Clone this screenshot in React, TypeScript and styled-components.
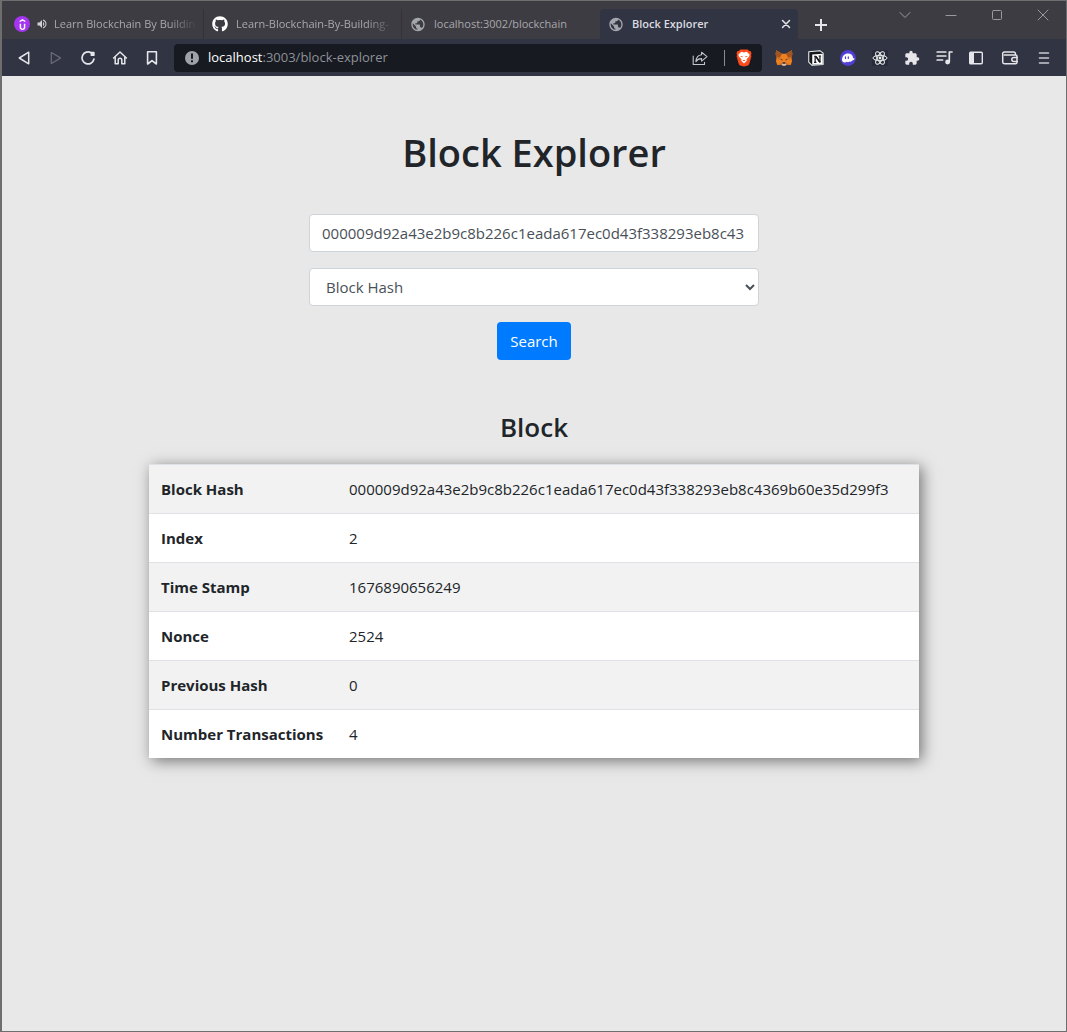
import React, { useState } from "react";
import styled, { createGlobalStyle, css } from "styled-components";
import { FaGithub } from "react-icons/fa";
import { MdExtension, MdPublic, MdVolumeUp } from "react-icons/md";
import { SiUdemy } from "react-icons/si";

const FONT = `"Segoe UI", "Open Sans", "Noto Sans", sans-serif`;

const GlobalStyle = createGlobalStyle`
  *, *::before, *::after { box-sizing: border-box; }
  body { margin: 0; background: #e8e8e8; color: #212529; font-family: ${FONT}; }
  button, input, select { font-family: inherit; margin: 0; }
`;

const Window = styled.div`
  min-height: 100vh;
  display: flex;
  flex-direction: column;
  border: 1px solid #6e6e6e;
  border-left-width: 2px;
`;

const TabStrip = styled.header`
  height: 38px;
  display: flex;
  align-items: flex-end;
  padding-left: 4px;
  background: #3d3c43;
`;

const Tab = styled.a<{ $active?: boolean }>`
  flex: 0 1 198px;
  min-width: 0;
  height: 30px;
  padding: 0 6px 0 8px;
  display: flex;
  align-items: center;
  color: #a8a8ac;
  font-size: 11px;
  line-height: 18px;
  text-decoration: none;
  border-right: 1px solid transparent;

  ${({ $active }) =>
    $active
      ? css`
          background: #313443;
          border-radius: 4px 4px 0 0;
          color: #dcdce0;
          font-weight: 600;
        `
      : css`
          &:nth-child(-n + 2) {
            border-right-color: #333238;
          }
        `}
`;

const TabIcon = styled.span`
  flex: none;
  width: 16px;
  height: 16px;
  display: flex;
  align-items: center;
  justify-content: center;
  margin-right: 8px;
`;

const Udemy = styled(TabIcon)`
  border-radius: 50%;
  background: #a435f0;
  color: #fff;
  margin-right: 6px;
`;

const Audio = styled.span`
  flex: none;
  display: flex;
  color: #d0d0d4;
  margin-right: 6px;
`;

const TabTitle = styled.span<{ $fade?: boolean }>`
  flex: 1;
  min-width: 0;
  overflow: hidden;
  white-space: nowrap;
  ${({ $fade }) =>
    $fade && "mask-image: linear-gradient(to right, #000 calc(100% - 28px), transparent);"}
`;

const IconButton = styled.button<{ $width?: number; $color?: string }>`
  flex: none;
  width: ${({ $width }) => $width ?? 32}px;
  height: 28px;
  padding: 0;
  border: 0;
  background: none;
  color: ${({ $color }) => $color ?? "#e6e6ea"};
  display: flex;
  align-items: center;
  justify-content: center;
`;

const WindowControls = styled.div`
  align-self: flex-start;
  margin-left: auto;
  display: flex;
`;

const Toolbar = styled.nav`
  height: 37px;
  padding: 0 6px;
  display: flex;
  align-items: center;
  background: #313443;
`;

const AddressBar = styled.div`
  flex: 1;
  min-width: 0;
  height: 28px;
  margin: 0 6px;
  padding-left: 10px;
  padding-right: 2px;
  display: flex;
  align-items: center;
  background: #171a21;
  border-radius: 4px;
`;

const Url = styled.div`
  flex: 1;
  min-width: 0;
  overflow: hidden;
  white-space: nowrap;
  margin-left: 8px;
  padding-bottom: 2px;
  font-size: 13px;
  line-height: 20px;
  color: #8e9197;

  b {
    font-weight: 400;
    color: #fff;
  }
`;

const Separator = styled.span`
  width: 1px;
  height: 16px;
  margin: 0 3px 0 8px;
  background: #8a8c92;
`;

const Main = styled.main`
  flex: 1;
  display: flex;
  flex-direction: column;
  align-items: center;
  padding: 52px 16px 0;
`;

const Title = styled.h1`
  margin: 0;
  font-size: 38px;
  font-weight: 600;
  line-height: 48px;
`;

const SearchForm = styled.form`
  width: 100%;
  max-width: 450px;
  margin-top: 38px;
  display: flex;
  flex-direction: column;
  align-items: center;
  gap: 16px;
`;

const field = css`
  width: 100%;
  height: 38px;
  padding: 6px 12px;
  border: 1px solid #ced4da;
  border-radius: 4px;
  background: #fff;
  color: #495057;
  font-size: 15px;
  line-height: 24px;
`;

const TextField = styled.input`
  ${field}
`;

const SelectField = styled.select`
  ${field}
`;

const SearchButton = styled.button`
  height: 38px;
  padding: 0 13px;
  border: 0;
  border-radius: 4px;
  background: #007bff;
  color: #fff;
  font-size: 15px;
  line-height: 24px;
`;

const Subtitle = styled.h3`
  margin: 50px 0 20px;
  font-size: 26px;
  font-weight: 600;
  line-height: 34px;
`;

const BlockTable = styled.table`
  width: 100%;
  max-width: 770px;
  border-collapse: separate;
  border-spacing: 0;
  background: #fff;
  font-size: 15px;
  line-height: 24px;
  box-shadow: 3px 3px 14px rgba(0, 0, 0, 0.5);

  tr:nth-child(odd) {
    background: #f2f2f2;
  }
`;

const cell = css`
  padding: 12px;
  border-top: 1px solid #dee2e6;
  text-align: left;
  white-space: nowrap;
`;

const NameCell = styled.th`
  ${cell}
  width: 188px;
  font-weight: 700;
`;

const ValueCell = styled.td`
  ${cell}
`;

const stroke = {
  fill: "none",
  stroke: "currentColor",
  strokeLinecap: "round" as const,
  strokeLinejoin: "round" as const,
};

const Back = () => (
  <svg width="16" height="16" viewBox="0 0 16 16" {...stroke} strokeWidth="1.5">
    <path d="M12.7 2.2v11.6L3.3 8z" />
  </svg>
);
const Forward = () => (
  <svg width="16" height="16" viewBox="0 0 16 16" {...stroke} strokeWidth="1.2">
    <path d="M3.3 2.6v10.8L12.6 8z" />
  </svg>
);
const Reload = () => (
  <svg width="16" height="16" viewBox="0 0 16 16" {...stroke} strokeWidth="1.7">
    <path d="M13.9 9.2A6 6 0 1 1 11.2 2.8" />
    <path d="M11.4 2.6h2.4v2.6h-2.4z" fill="currentColor" />
  </svg>
);
const Home = () => (
  <svg width="16" height="16" viewBox="0 0 16 16" {...stroke} strokeWidth="1.5">
    <path d="M1.6 8 8 2l6.4 6M3.2 7v6.7h3V10a1.8 1.8 0 0 1 3.6 0v3.7h3V7" />
  </svg>
);
const Bookmark = () => (
  <svg width="16" height="16" viewBox="0 0 16 16" {...stroke} strokeWidth="1.6">
    <path d="M3.6 1.8h8.8V14L8 10.6 3.6 14z" />
  </svg>
);
const Info = () => (
  <svg width="16" height="16" viewBox="0 0 16 16">
    <circle cx="8" cy="8" r="7" fill="#9fa2a9" />
    <path d="M7 3.6h2v5.2H7zM7 10.2h2v2H7z" fill="#171a21" />
  </svg>
);
const Share = () => (
  <svg width="16" height="16" viewBox="0 0 16 16" {...stroke} strokeWidth="1.1">
    <path d="M1.2 6v8.5h11.3v-2.3" />
    <path d="M9.600 2.200 15 6.600l-5.400 4.600V8.600C6.700 8.500 5.200 9.500 3.900 11.600 4.200 7.600 6 5 9.600 4.700z" />
  </svg>
);

const Brave = () => (
  <svg width="16" height="18" viewBox="0 0 16 18">
    <path d="M4.300.6h7.400l1.400 1.500 1.300-.1 1.200 2.300-.6 1.500.4 1.400-2 7.200c-.3.900-.8 1.500-1.500 2L8 17.600l-3.900-1.200c-.7-.5-1.200-1.100-1.500-2L.6 7.200 1 5.800.4 4.300 1.600 2l1.300.1z" fill="#fb4b1b" />
    <path d="M8 3.500 5.400 2.800 2.400 5.600l.5 1.900 2.600 3-.4 1.300L8 14.600l2.900-2.800-.4-1.300 2.600-3 .5-1.900-3-2.800z" fill="#fff" />
    <path d="m4.200 6.900 2.600.3-.6 1.300zM11.800 6.900l-2.600.3.600 1.300zM6.600 11.500 8 10.700l1.400.8L8 12.300z" fill="#fb4b1b" />
  </svg>
);
const Fox = () => (
  <svg width="18" height="18" viewBox="0 0 18 18">
    <path d="M1.200 1.200 6.900 4.800h4.200l5.700-3.600.6 4.100-.9 3.200.5 3.900-1.400 3.900-3.700-.9-1.100 1.200H7.200l-1.100-1.200-3.700.9L1 12.400l.5-3.900-.9-3.200z" fill="#ee8022" />
    <path d="M1.200 1.200 6.900 5 5.300 8 1.500 8.500.6 5.300zM16.800 1.200 11.100 5l1.600 3 3.800.5.900-3.200z" fill="#a3541f" />
    <path d="M5.300 8 1.500 8.600l2.600 2.200zM12.700 8l3.800.6-2.600 2.200z" fill="#c96a22" />
    <path d="m4.900 9.800 2.200.2.500 1.700zM13.100 9.800l-2.200.2-.5 1.700z" fill="#3a3a42" />
    <path d="M2.600 16 6.600 13.600l.8 2zM15.400 16l-4-2.400-.8 2z" fill="#d27329" />
    <path d="M7.200 14.400h3.600l.2 1.500-1 .8H8l-1-.8z" fill="#cfc2b8" />
    <path d="M7.700 13.300h2.600l.3 1.500H7.400z" fill="#26303a" />
  </svg>
);
const Notion = () => (
  <svg width="16" height="16" viewBox="0 0 17 17">
    <path d="M.8 1.800 12.600.7l3.500 2.600v12L4.300 16.300.8 12.800z" fill="#17181d" stroke="#f2f2f2" strokeWidth="1.100" strokeLinejoin="round" />
    <path d="M4.500 4.700 15.600 4v11l-11.100.7z" fill="#fff" />
    <path d="M6.600 6.700h1.700l4 5.900M11.300 6.400h2.600M6.400 13.200h2.600" fill="none" stroke="#17181d" strokeWidth="1.2" />
    <path d="M7.600 6.700v6.500M12.700 6.400v6.800" stroke="#17181d" strokeWidth="1.3" />
    <path d="M7.200 6.700h2l3.900 5.200v1.300h-1.300z" fill="#17181d" />
  </svg>
);
const Ghost = () => (
  <svg width="16" height="16" viewBox="0 0 16 16">
    <circle cx="8" cy="8" r="7.9" fill="#5140d6" />
    <path d="M2 9.800C2.200 6 4.600 3.600 8 3.600c3.200 0 5 2 5.100 4.700h1.400c0 1.200-.7 1.900-1.900 1.900-.8 1.300-2 1.800-3 1.200-.8.9-1.900 1.100-2.700.4C5.400 13 2 12.900 2 9.800z" fill="#fff" />
    <path d="M5.500 6.900v1.500M8.300 6.900v1.500" stroke="#5140d6" strokeWidth="1.2" strokeLinecap="round" />
  </svg>
);
const ReactMark = () => (
  <svg width="16" height="16" viewBox="0 0 16 16">
    <rect width="16" height="16" fill="#282c3a" />
    <g fill="none" stroke="#f0f0f2" strokeWidth="1">
      <ellipse cx="8" cy="8" rx="7" ry="2.7" />
      <ellipse cx="8" cy="8" rx="7" ry="2.7" transform="rotate(60 8 8)" />
      <ellipse cx="8" cy="8" rx="7" ry="2.7" transform="rotate(120 8 8)" />
    </g>
    <circle cx="8" cy="8" r="1.4" fill="#f0f0f2" />
  </svg>
);
const Queue = () => (
  <svg width="17" height="16" viewBox="0 0 17 16" {...stroke} strokeWidth="1.7">
    <path d="M1.200 2h8.600M1.200 6h8.600M1.200 10h5.400" />
    <path d="M16 2h-2.700v9.800" />
    <circle cx="11.600" cy="12" r="1.6" fill="currentColor" />
  </svg>
);
const Sidebar = () => (
  <svg width="16" height="16" viewBox="0 0 16 16">
    <rect x="1.700" y="2.200" width="12.600" height="11.600" rx="1" fill="none" stroke="currentColor" strokeWidth="1.4" />
    <path d="M2 2.500h4v11H2z" fill="currentColor" />
  </svg>
);
const Wallet = () => (
  <svg width="18" height="18" viewBox="0 0 18 18" {...stroke} strokeWidth="1.5">
    <path d="M14.400 5.800V4.600a1.600 1.600 0 0 0-1.600-1.600H3.400a1.600 1.600 0 0 0-1.700 1.600v8.500a1.700 1.700 0 0 0 1.700 1.700h11a1.600 1.600 0 0 0 1.600-1.600V7.600a1.600 1.600 0 0 0-1.600-1.600H3.400" />
    <path d="M16 8.400h-3.200a2 2 0 0 0 0 4H16" />
  </svg>
);
const Menu = () => (
  <svg width="12" height="14" viewBox="0 0 12 14" {...stroke} strokeWidth="1.6">
    <path d="M1.500 2h9M1.500 7h9M1.500 12h9" />
  </svg>
);
const Close = () => (
  <svg width="10" height="10" viewBox="0 0 10 10" {...stroke} strokeWidth="1.5">
    <path d="m1.500 1.500 7 7M8.500 1.500l-7 7" />
  </svg>
);
const Plus = () => (
  <svg width="12" height="12" viewBox="0 0 12 12" stroke="currentColor" strokeWidth="2">
    <path d="M6 0v12M0 6h12" />
  </svg>
);
const WinGlyph = ({ d }: { d: string }) => (
  <svg width="12" height="12" viewBox="0 0 12 12" {...stroke} strokeWidth="1">
    <path d={d} />
  </svg>
);

const HASH = "000009d92a43e2b9c8b226c1eada617ec0d43f338293eb8c4369b60e35d299f3";

const rows: [string, string][] = [
  ["Block Hash", HASH],
  ["Index", "2"],
  ["Time Stamp", "1676890656249"],
  ["Nonce", "2524"],
  ["Previous Hash", "0"],
  ["Number Transactions", "4"],
];

const windowControls: [string, string][] = [
  ["Search tabs", "M1 3.500 6 8.500l5-5"],
  ["Minimize", "M1 6.500h10"],
  ["Maximize", "M2.500 1.500h7a1 1 0 0 1 1 1v7a1 1 0 0 1-1 1h-7a1 1 0 0 1-1-1v-7a1 1 0 0 1 1-1z"],
  ["Close window", "m1 1 10 10M11 1 1 11"],
];

export default function App() {
  const [query, setQuery] = useState(HASH.slice(0, 50));
  const [kind, setKind] = useState("hash");

  return (
    <Window>
      <GlobalStyle />
      <TabStrip>
        <Tab href="#udemy">
          <Udemy><SiUdemy size={11} /></Udemy>
          <Audio><MdVolumeUp size={12} /></Audio>
          <TabTitle $fade>Learn Blockchain By Building</TabTitle>
        </Tab>
        <Tab href="#github">
          <TabIcon><FaGithub size={16} color="#fff" /></TabIcon>
          <TabTitle $fade>Learn-Blockchain-By-Building-</TabTitle>
        </Tab>
        <Tab href="#blockchain">
          <TabIcon><MdPublic size={17} color="#a3a6ac" /></TabIcon>
          <TabTitle>localhost:3002/blockchain</TabTitle>
        </Tab>
        <Tab href="#block-explorer" $active>
          <TabIcon><MdPublic size={17} color="#a3a6ac" /></TabIcon>
          <TabTitle>Block Explorer</TabTitle>
          <IconButton as="span" $width={10}><Close /></IconButton>
        </Tab>
        <IconButton aria-label="New tab" $width={46}><Plus /></IconButton>
        <WindowControls>
          {windowControls.map(([label, d]) => (
            <IconButton key={label} aria-label={label} $width={46} $color="#9a999e">
              <WinGlyph d={d} />
            </IconButton>
          ))}
        </WindowControls>
      </TabStrip>

      <Toolbar>
        <IconButton aria-label="Back"><Back /></IconButton>
        <IconButton aria-label="Forward" $color="#6d6f79"><Forward /></IconButton>
        <IconButton aria-label="Reload"><Reload /></IconButton>
        <IconButton aria-label="Home"><Home /></IconButton>
        <IconButton aria-label="Bookmark"><Bookmark /></IconButton>
        <AddressBar>
          <Info />
          <Url><b>localhost</b>:3003/block-explorer</Url>
          <IconButton aria-label="Share" $color="#c3c4c8"><Share /></IconButton>
          <Separator />
          <IconButton aria-label="Shields"><Brave /></IconButton>
        </AddressBar>
        <IconButton aria-label="MetaMask"><Fox /></IconButton>
        <IconButton aria-label="Notion"><Notion /></IconButton>
        <IconButton aria-label="Phantom"><Ghost /></IconButton>
        <IconButton aria-label="React tools"><ReactMark /></IconButton>
        <IconButton aria-label="Extensions"><MdExtension size={16} /></IconButton>
        <IconButton aria-label="Media"><Queue /></IconButton>
        <IconButton aria-label="Sidebar"><Sidebar /></IconButton>
        <IconButton aria-label="Wallet" $width={36}><Wallet /></IconButton>
        <IconButton aria-label="Menu" $color="#c9cacf"><Menu /></IconButton>
      </Toolbar>

      <Main>
        <Title>Block Explorer</Title>
        <SearchForm onSubmit={(e: React.FormEvent) => e.preventDefault()}>
          <TextField aria-label="Search" value={query} onChange={(e) => setQuery(e.target.value)} />
          <SelectField aria-label="Search by" value={kind} onChange={(e) => setKind(e.target.value)}>
            <option value="hash">Block Hash</option>
          </SelectField>
          <SearchButton type="submit">Search</SearchButton>
        </SearchForm>
        <Subtitle>Block</Subtitle>
        <BlockTable>
          <tbody>
            {rows.map(([name, value]) => (
              <tr key={name}>
                <NameCell scope="row">{name}</NameCell>
                <ValueCell>{value}</ValueCell>
              </tr>
            ))}
          </tbody>
        </BlockTable>
      </Main>
    </Window>
  );
}
